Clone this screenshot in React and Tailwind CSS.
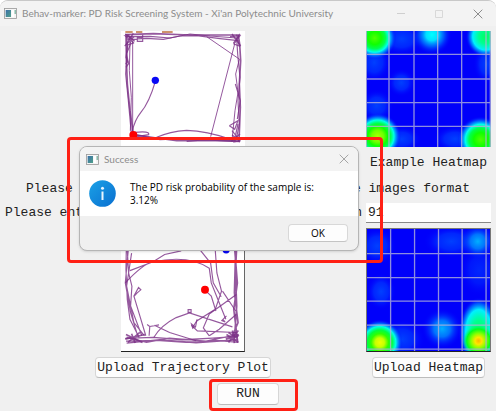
import React from "react";

function AppIcon() {
  return (
    <svg width="13" height="11" viewBox="0 0 39 33" aria-hidden="true">
      <rect x="1.5" y="1.5" width="36" height="30" fill="#f5f5f5" stroke="#9b9b9b" strokeWidth="2.5" />
      <defs>
        <linearGradient id="appPane" x1="0" y1="0" x2="1" y2="1">
          <stop offset="0" stopColor="#3b6fa8" />
          <stop offset="1" stopColor="#4fa08a" />
        </linearGradient>
      </defs>
      <rect x="5" y="6" width="16" height="21" fill="url(#appPane)" />
      <rect x="23" y="6" width="7" height="21" fill="#ffffff" />
      <rect x="32" y="6" width="3" height="12" fill="#5aa088" />
    </svg>
  );
}

function CloseIcon() {
  return (
    <svg width="10" height="10" viewBox="0 0 10 10" fill="none" stroke="currentColor" aria-hidden="true">
      <path d="M.7 .7 9.3 9.3M9.3 .7 .7 9.3" />
    </svg>
  );
}

function ExampleTrajectory() {
  return (
    <svg className="h-[116px] w-[124px] bg-white" viewBox="33 21 372 348" preserveAspectRatio="none" role="img" aria-label="Example trajectory">
      <path d="M46 24H68M78 24H97M156 24H188" stroke="#c0703c" strokeWidth="5" />
      <g fill="none" stroke="#7b2f86" strokeWidth="3.5" strokeOpacity=".8">
        <path d="M48 32 130 29 240 33 385 33 389 60 392 110 388 180 391 250 387 352 300 349 200 350 140 342 70 332 60 260 52 180 49 100Z" strokeWidth="5" />
        <path d="M50 38 120 37 180 42 240 30 300 36 380 42 383 90 390 160 384 230 388 300 378 350 330 347 240 343 150 347 90 335 64 330 56 240 47 150 52 60Z" />
        <path d="M52 46 110 43 160 46 210 36 260 35 330 44 385 50M56 30 62 60 50 88 54 112 47 120M44 66 70 40 46 36 72 58 50 30M98 32V52H82V40H98M62 40 68 58 55 62" />
        <path d="M46 30 74 52M70 28 48 62M366 30 392 66M390 30 370 58M364 352 390 330M366 332 390 354M54 60 48 100 56 118 48 130" strokeWidth="4" />
        <path d="M68 50V330M60 54 58 140 64 220 61 320M290 38 389 106M374 60 302 338M388 106 377 150 384 205 375 260 366 350" strokeWidth="3" />
        <path d="M360 38 390 35 372 60 388 66 380 32M376 180 391 230 382 285M358 305 384 290 374 316 358 305M366 320 390 350 372 354 384 300M140 340Q180 322 230 319Q290 321 360 345M75 325Q120 320 116 332L80 338M230 352 280 348 388 352" />
        <path d="M136 172Q118 235 92 266Q74 288 66 325" />
      </g>
      <circle cx="136" cy="169" r="11" fill="#0808f5" />
      <circle cx="70" cy="333" r="12" fill="#ff0000" />
    </svg>
  );
}

function UploadedTrajectory() {
  return (
    <svg className="h-[124px] w-[124px] border-b border-r border-b-[#222] border-r-[#666] bg-white" viewBox="33 24 372 372" preserveAspectRatio="none" role="img" aria-label="Uploaded trajectory">
      <g fill="none" stroke="#7b2f86" strokeWidth="3.5" strokeOpacity=".8">
        <path d="M50 30 48 150 52 240 60 300 88 355M56 80 46 190 62 280 82 345M65 100 50 200 72 310 104 350M52 90 56 160 66 200 62 260 96 350" />
        <path d="M384 60 379 160 383 260 376 360M377 90 385 190 374 270 386 368M380 80 376 220 387 310 370 350" strokeWidth="5" />
        <path d="M46 358 130 355 220 362 310 357 388 352M48 366 140 364 230 370 320 364 388 370M50 372 150 362 260 371 386 362M50 354 110 370 180 357 290 366 388 346" strokeWidth="4" />
        <path d="M46 190Q100 132 130 126Q240 104 300 146L306 190 330 250 350 300M60 153 130 126 165 104 215 93M272 90 304 130 312 190 336 232M318 90 323 160 337 215 318 270 262 305 250 324" />
        <path d="M108 350 90 290 72 230 86 204 93 211 82 220 73 230M132 355Q155 318 200 295L240 281 370 323M118 350 120 322 112 316M120 322 148 317M134 318 180 340 260 365M246 318 264 335 382 340M258 325 263 300M300 350 282 326 300 284 382 225M340 215 380 275M340 300 348 308 338 304 352 290M300 350 330 330 382 285M286 211 306 230 320 275" />
        <path d="M236 271h9v8h-9zM246 314l10 8-6 5z" />
        <path d="M48 346 98 370M54 370 90 340M65 344 76 372M46 360 105 346M352 346 388 370M358 370 388 334M370 334 376 372M350 360 390 348M358 340 385 358" strokeWidth="5" />
      </g>
      <circle cx="351" cy="90" r="11" fill="#0808f5" />
      <circle cx="287" cy="211" r="12" fill="#ff0000" />
    </svg>
  );
}

function HeatGradients() {
  return (
    <svg className="absolute size-0" aria-hidden="true">
      <defs>
        <radialGradient id="hotCore">
          <stop offset="0" stopColor="#ffb400" />
          <stop offset=".22" stopColor="#ffe600" />
          <stop offset=".45" stopColor="#90ff00" />
          <stop offset=".75" stopColor="#00ff20" />
          <stop offset="1" stopColor="#00ff80" stopOpacity="0" />
        </radialGradient>
        <radialGradient id="hotYellow">
          <stop offset="0" stopColor="#f0ff00" />
          <stop offset=".2" stopColor="#c8ff00" />
          <stop offset=".38" stopColor="#30ff00" />
          <stop offset=".54" stopColor="#00ff40" />
          <stop offset=".7" stopColor="#00ffe8" />
          <stop offset=".83" stopColor="#0090ff" stopOpacity=".7" />
          <stop offset="1" stopColor="#0000ff" stopOpacity="0" />
        </radialGradient>
        <radialGradient id="hotLime">
          <stop offset="0" stopColor="#a8ff00" />
          <stop offset=".25" stopColor="#70ff00" />
          <stop offset=".42" stopColor="#10ff00" />
          <stop offset=".56" stopColor="#00ff50" />
          <stop offset=".7" stopColor="#00ffe8" />
          <stop offset=".83" stopColor="#0090ff" stopOpacity=".7" />
          <stop offset="1" stopColor="#0000ff" stopOpacity="0" />
        </radialGradient>
        <radialGradient id="hotGreen">
          <stop offset="0" stopColor="#50ff00" />
          <stop offset=".3" stopColor="#10ff00" />
          <stop offset=".5" stopColor="#00ff50" />
          <stop offset=".66" stopColor="#00fff0" />
          <stop offset=".82" stopColor="#0080ff" stopOpacity=".7" />
          <stop offset="1" stopColor="#0000ff" stopOpacity="0" />
        </radialGradient>
        <radialGradient id="warmTeal">
          <stop offset="0" stopColor="#00ff60" />
          <stop offset=".35" stopColor="#00ff90" />
          <stop offset=".65" stopColor="#00f0ff" />
          <stop offset=".82" stopColor="#0080ff" stopOpacity=".7" />
          <stop offset="1" stopColor="#0000ff" stopOpacity="0" />
        </radialGradient>
        <radialGradient id="warmCyan">
          <stop offset="0" stopColor="#00ffff" />
          <stop offset=".3" stopColor="#00e0ff" />
          <stop offset=".6" stopColor="#0080ff" stopOpacity=".7" />
          <stop offset="1" stopColor="#0000ff" stopOpacity="0" />
        </radialGradient>
        <radialGradient id="coolBlue">
          <stop offset="0" stopColor="#00b0ff" />
          <stop offset=".4" stopColor="#0090ff" stopOpacity=".8" />
          <stop offset="1" stopColor="#0000ff" stopOpacity="0" />
        </radialGradient>
        <radialGradient id="faintBlue">
          <stop offset="0" stopColor="#0040ff" />
          <stop offset=".5" stopColor="#0030ff" stopOpacity=".8" />
          <stop offset="1" stopColor="#0000ff" stopOpacity="0" />
        </radialGradient>
      </defs>
    </svg>
  );
}

function ExampleHeatmap() {
  return (
    <svg className="h-[116px] w-full" viewBox="33 21 375 348" preserveAspectRatio="none" role="img" aria-label="Example heatmap image">
      <rect x="33" y="21" width="375" height="348" fill="#0000fa" />
      <ellipse cx="140" cy="45" rx="70" ry="50" fill="url(#faintBlue)" />
      <ellipse cx="58" cy="115" rx="50" ry="60" fill="url(#faintBlue)" />
      <ellipse cx="65" cy="245" rx="50" ry="50" fill="url(#faintBlue)" />
      <ellipse cx="395" cy="120" rx="40" ry="60" fill="url(#faintBlue)" />
      <circle cx="139" cy="176" r="42" fill="url(#faintBlue)" />
      <ellipse cx="140" cy="345" rx="60" ry="40" fill="url(#faintBlue)" />
      <ellipse cx="300" cy="345" rx="65" ry="40" fill="url(#faintBlue)" />
      <circle cx="59" cy="42" r="65" fill="url(#hotGreen)" />
      <circle cx="231" cy="32" r="60" fill="url(#warmCyan)" />
      <ellipse cx="392" cy="38" rx="60" ry="62" fill="url(#warmTeal)" />
      <circle cx="68" cy="337" r="70" fill="url(#hotLime)" />
      <circle cx="377" cy="347" r="70" fill="url(#hotGreen)" />
      <path d="M34 21V369M102 21V369M177 21V369M248 21V369M320 21V369M393 21V369M406 21V369M33 91H408M33 165H408M33 236H408M33 307H408" stroke="#b0b0d8" strokeOpacity=".8" strokeWidth="4" />
    </svg>
  );
}

function UploadedHeatmap() {
  return (
    <svg className="h-[124px] w-full border border-[#777] border-b-[#222]" viewBox="33 24 375 372" preserveAspectRatio="none" role="img" aria-label="Uploaded heatmap image">
      <rect x="33" y="24" width="375" height="372" fill="#0000fa" />
      <circle cx="64" cy="76" r="58" fill="url(#faintBlue)" />
      <ellipse cx="76" cy="215" rx="45" ry="56" fill="url(#faintBlue)" />
      <ellipse cx="290" cy="62" rx="85" ry="50" fill="url(#faintBlue)" />
      <ellipse cx="375" cy="150" rx="60" ry="80" fill="url(#faintBlue)" opacity=".6" />
      <circle cx="371" cy="62" r="56" fill="url(#coolBlue)" />
      <circle cx="262" cy="328" r="62" fill="url(#coolBlue)" />
      <ellipse cx="140" cy="360" rx="70" ry="60" fill="url(#faintBlue)" />
      <ellipse cx="374" cy="340" rx="62" ry="108" fill="url(#warmTeal)" />
      <circle cx="72" cy="370" r="70" fill="url(#hotYellow)" />
      <circle cx="373" cy="365" r="48" fill="url(#hotCore)" />
      <path d="M105 24V396M178 24V396M251 24V396M323 24V396M396 24V396M33 99H408M33 172H408M33 244H408M33 317H408M33 390H408" stroke="#b0b0d8" strokeOpacity=".8" strokeWidth="4" />
    </svg>
  );
}

function FormButton({ children, className }) {
  return (
    <button type="button" className={`rounded-sm border border-[#d6d6d6] border-b-[#bcbcbc] bg-[#fdfdfd] ${className}`}>
      {children}
    </button>
  );
}

function SuccessDialog() {
  return (
    <div
      role="dialog"
      aria-labelledby="dialog-title"
      className="absolute left-[79px] top-[145px] w-[280px] overflow-hidden rounded-lg border border-[#b5b5b5] bg-[#f0f0f0] font-['Open_Sans',sans-serif] text-[10px] text-black shadow-sm"
    >
      <div className="flex h-6 items-center gap-[5px] bg-[#f3f3f3] pl-[6px] pr-[9px] font-['Lato',sans-serif] text-[#8c8c8c]">
        <AppIcon />
        <h2 id="dialog-title" className="flex-1">Success</h2>
        <button type="button" aria-label="Close dialog" className="text-[#a5a5a5]"><CloseIcon /></button>
      </div>
      <div className="flex h-[45px] items-center gap-[14px] bg-white pl-[9px]">
        <svg width="27" height="27" viewBox="0 0 27 27" aria-hidden="true">
          <defs>
            <linearGradient id="infoFill" x1="0" y1="0" x2="1" y2="1">
              <stop offset="0" stopColor="#1ba1e6" />
              <stop offset="1" stopColor="#0a6fd0" />
            </linearGradient>
          </defs>
          <circle cx="13.500" cy="13.500" r="13.300" fill="url(#infoFill)" />
          <circle cx="13.500" cy="8.300" r="1.500" fill="#e8f5ff" />
          <path d="M13.500 11.500V20" stroke="#e8f5ff" strokeWidth="2" />
        </svg>
        <p className="font-medium leading-[13px]">
          The PD risk probability of the sample is:
          <br />
          3.12%
        </p>
      </div>
      <div className="flex h-[34px] items-center justify-end pr-[10px]">
        <button type="button" className="h-[18px] w-[60px] rounded-sm border border-[#d8d8d8] border-b-[#c4c4c4] bg-[#fdfdfd] font-medium leading-4">OK</button>
      </div>
    </div>
  );
}

export default function App() {
  return (
    <div className="relative min-h-screen overflow-hidden rounded-t-lg border-t border-[#c8c8c8] bg-[#f0f0f0] font-['Liberation_Mono',monospace] text-[13px] text-[#222]">
      <HeatGradients />
      <header className="flex h-[25px] items-center gap-[5px] bg-[#f3f3f3] pl-1 pr-[13px] font-['Lato',sans-serif] text-[10px] text-[#8c8c8c]">
        <AppIcon />
        <h1 className="flex-1 whitespace-nowrap">Behav-marker: PD Risk Screening System - Xi'an Polytechnic University</h1>
        <div className="flex items-center gap-[30px]">
          <button type="button" aria-label="Minimize" className="text-[#cfcfcf]">
            <svg width="8" height="8" viewBox="0 0 8 8" stroke="currentColor" aria-hidden="true"><path d="M0 3.500H8" /></svg>
          </button>
          <button type="button" aria-label="Maximize" className="text-[#d8d8d8]">
            <svg width="8" height="8" viewBox="0 0 8 8" fill="none" stroke="currentColor" aria-hidden="true"><path d="M.5 .5H7.500V7.500H.5Z" /></svg>
          </button>
          <button type="button" aria-label="Close"><CloseIcon /></button>
        </div>
      </header>

      <main className="pr-[5px] pt-[5px]">
        <div className="grid grid-cols-[1fr_125px] justify-items-center">
          <ExampleTrajectory />
          <ExampleHeatmap />
          <p className="col-start-2 h-8 leading-8">Example Heatmap</p>
        </div>
        <div className="flex h-5 justify-between pl-[26px] pr-[21px] leading-5">
          <span>Please</span>
          <span>e images format</span>
        </div>
        <div className="grid grid-cols-[1fr_125px] items-center py-1">
          <label htmlFor="entry" className="flex justify-between pl-[5px] pr-1 leading-5">
            <span>Please ent</span>
            <span>n</span>
          </label>
          <input id="entry" defaultValue="91" className="h-5 w-full border-b border-[#888] bg-white px-[2px] outline-none" />
        </div>
        <div className="grid grid-cols-[1fr_125px] justify-items-center gap-y-[5px] pt-px">
          <UploadedTrajectory />
          <UploadedHeatmap />
          <FormButton className="h-[21px] px-px leading-5">Upload Trajectory Plot</FormButton>
          <FormButton className="h-[21px] px-px leading-5 whitespace-nowrap">Upload Heatmap</FormButton>
        </div>
      </main>
      <div className="flex justify-center pt-[5px]">
        <FormButton className="h-[22px] w-[62px] leading-5">RUN</FormButton>
      </div>

      <SuccessDialog />
      <div className="pointer-events-none absolute left-[67px] top-[136px] h-[126px] w-[316px] rounded-sm border-3 border-[#ff2015]" />
      <div className="pointer-events-none absolute left-[209px] top-[378px] h-8 w-[89px] rounded-sm border-3 border-[#ff2015]" />
    </div>
  );
}
